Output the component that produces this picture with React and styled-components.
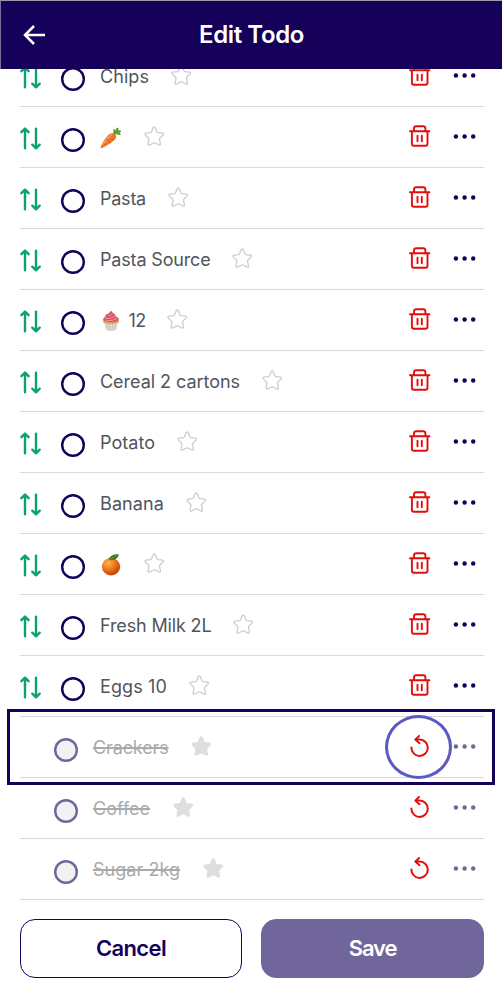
import { useLayoutEffect, useRef, useState } from "react";
import styled, { createGlobalStyle } from "styled-components";

const GlobalStyle = createGlobalStyle`
  :root {
    --navy: #15015a;
    --muted-navy: #71669b;
    --green: #0ba26b;
    --red: #e30d0d;
    --text: #50555c;
    --line: #d9d9d9;
  }
  * {
    box-sizing: border-box;
  }
  body {
    margin: 0;
    background-color: #fff;
    font-family: Inter, "Liberation Sans", sans-serif;
  }
  svg {
    display: block;
    overflow: visible;
  }
`;

const Screen = styled.div`
  width: 502px;
  height: 987px;
  display: flex;
  flex-direction: column;
  overflow: hidden;
`;

const Header = styled.header`
  flex: none;
  height: 69px;
  display: grid;
  grid-template-columns: 60px 1fr 60px;
  align-items: center;
  background-color: var(--navy);
  border-top: 1px solid #9c9bab;
  border-left: 1px solid #77709b;
  color: #fff;
`;

const BackButton = styled.button`
  border: 0;
  padding: 0 0 0 22px;
  background: none;
  color: inherit;
`;

const Title = styled.h1`
  margin: 0;
  text-align: center;
  font-size: 24px;
  line-height: 30px;
  font-weight: 600;
`;

const ListViewport = styled.main`
  flex: none;
  height: 831px;
  padding: 0 18px 0 20px;
  display: flex;
  flex-direction: column;
  justify-content: flex-end;
  overflow: hidden;
`;

const Row = styled.div`
  position: relative;
  flex: none;
  height: 61px;
  display: flex;
  align-items: center;
  padding-left: ${({ $done }) => ($done ? "34px" : "0")};
  padding-right: 8px;
  border-bottom: 1px solid var(--line);
`;

const DragHandle = styled.div`
  width: 22px;
  margin: 3px 19px 0 0;
  color: var(--green);
`;

const Check = styled.div`
  width: 24px;
  height: 24px;
  margin: 6px 15px 0 0;
  border-radius: 50%;
  background-color: ${({ $done }) => ($done ? "#f2f2f2" : "#fff")};
  box-shadow: inset 0 0 0 2.4px ${({ $done }) => ($done ? "var(--muted-navy)" : "var(--navy)")};
`;

const Label = styled.div`
  display: flex;
  align-items: center;
  gap: 6.5px;
  width: ${({ $width }) => $width}px;
  height: 24px;
  margin-top: 2px;
  margin-right: 21.5px;
  font-size: 18px;
  line-height: 24px;
  color: ${({ $done }) => ($done ? "#aaa" : "var(--text)")};
  white-space: nowrap;

  span {
    text-decoration: ${({ $done }) => ($done ? "line-through 2px #aaa" : "none")};
  }
`;

const Star = styled.div`
  margin: 0 auto 1px 0;
  color: ${({ $done }) => ($done ? "#dedede" : "#cbcbcb")};
`;

const Action = styled.div`
  width: 22px;
  margin-right: 22px;
  margin-bottom: 1.5px;
  color: var(--red);
`;

const More = styled.div`
  width: 23.5px;
  margin-bottom: 1px;
  color: ${({ $done }) => ($done ? "var(--muted-navy)" : "var(--navy)")};
`;

const HighlightBox = styled.div`
  position: absolute;
  inset: -8px -11px -8px -13px;
  border: 3px solid var(--navy);
  pointer-events: none;
`;

const HighlightRing = styled.div`
  position: absolute;
  top: -2px;
  left: 365px;
  width: 67px;
  height: 64px;
  border: 3px solid #5c59c4;
  border-radius: 50%;
  pointer-events: none;
`;

const Footer = styled.footer`
  display: grid;
  grid-template-columns: 222px 223px;
  gap: 19px;
  padding: 19px 18px 9px 20px;
`;

const Button = styled.button`
  height: 59px;
  padding: 0 0 1px;
  border: 1px solid ${({ $primary }) => ($primary ? "var(--muted-navy)" : "var(--navy)")};
  border-radius: 15px;
  background-color: ${({ $primary }) => ($primary ? "var(--muted-navy)" : "#fff")};
  color: ${({ $primary }) => ($primary ? "#fff" : "var(--navy)")};
  font: 600 22px/30px Inter, "Liberation Sans", sans-serif;
`;

const Fitted = styled.span`
  display: inline-block;
  white-space: nowrap;
`;

// Tracks the text in or out so that it fills the given width.
const FitText = ({ width, children }) => {
  const ref = useRef(null);
  const [spacing, setSpacing] = useState(0);

  useLayoutEffect(() => {
    const el = ref.current;
    el.style.letterSpacing = "0px";
    const next = (width - el.getBoundingClientRect().width) / children.length;
    el.style.letterSpacing = `${next}px`;
    setSpacing(next);
  }, [width, children]);

  return (
    <Fitted ref={ref} style={{ letterSpacing: `${spacing}px` }}>
      {children}
    </Fitted>
  );
};

const BackIcon = () => (
  <svg width="23" height="20" viewBox="0 0 23 20" fill="none" stroke="currentColor" strokeWidth="2.5">
    <path d="M22 10H2.2M11 1L2 10l9 9" />
  </svg>
);

const SortIcon = () => (
  <svg width="22" height="23" viewBox="0 0 22 23" fill="none" stroke="currentColor" strokeWidth="2.4" strokeLinecap="round" strokeLinejoin="round">
    <path d="M5 21.3V1.6M1.4 5.2L5 1.6l3.6 3.6" />
    <path d="M16 1.6v19.7M12.3 17.7l3.7 3.6 3.7-3.6" />
  </svg>
);

const StarIcon = ({ filled }) => (
  <svg width="20.5" height="20.5" viewBox="0 0 21 21" fill={filled ? "currentColor" : "none"} stroke="currentColor" strokeWidth="1.3" strokeLinejoin="round">
    <path d="M9.5 1.5Q10.5.2 11.4 1.5L13.4 6.2Q13.7 6.8 14.4 6.9L19 7.4Q20.7 7.8 19.6 9.1L16.2 12.5Q15.8 13 15.9 13.7L16.8 18.4Q16.9 20.1 15.3 19.5L11.2 17.4Q10.5 17.1 9.8 17.4L5.7 19.5Q4 20.1 4.2 18.4L5.1 13.7Q5.2 13 4.7 12.5L1.3 9.1Q.3 7.8 2 7.4L6.6 6.9Q7.3 6.8 7.6 6.2Z" />
  </svg>
);

const TrashIcon = () => (
  <svg width="22" height="22" viewBox="0 0 22 22" fill="none" stroke="currentColor" strokeWidth="1.9" strokeLinecap="round" strokeLinejoin="round">
    <path d="M1 6.3h19.4M2.9 6.3v12.4q0 2 2 2h11.6q2 0 2-2V6.3" />
    <path d="M5 6V3.5Q5 1.2 7.3 1.2h6.8q2.3 0 2.3 2.3V6" />
    <path d="M8.5 10.8v5.4M12.8 10.8v5.4" />
  </svg>
);

const RestoreIcon = () => (
  <svg width="22" height="22" viewBox="0 0 22 22" fill="none" stroke="currentColor" strokeWidth="2" strokeLinecap="round" strokeLinejoin="round">
    <path d="M2.4 12.5A8.2 8.2 0 1 0 10.6 4.5H7" />
    <path d="M10 1L6.3 4.6l4.2 3.6" />
  </svg>
);

const DotsIcon = () => (
  <svg width="23.5" height="5" viewBox="0 0 23.5 5" fill="currentColor">
    <circle cx="2.9" cy="2.5" r="2.2" />
    <circle cx="11.6" cy="2.5" r="2.2" />
    <circle cx="20.2" cy="2.5" r="2.2" />
  </svg>
);

const CarrotIcon = () => (
  <svg width="22" height="22" viewBox="0 0 22 22">
    <path d="M14 8C12 6 15 4 12.8 2.3 15 1.7 15.3 2.8 15.5 4 15.8 2 16.5 1 18 .4c.6 1.2.4 2.4-.1 3.3 1.2-.7 2.2-.6 3.2.2-.5 1.1-1.4 1.5-2.4 1.5 1.2.2 1.9.9 2.1 2.1-1.7.5-3.5 0-4.7-.7z" fill="#46951e" />
    <path d="M15.2 7.3l1.7-4.5M15.6 7l3.8-2.5M15.6 7.2l3.5-.2" stroke="#79bd36" strokeWidth=".8" />
    <path d="M.5 21.2C1 17.5 6.5 8.7 10.1 6.7c1.9-1.1 4.7-.5 5.7 1.3 1.1 2-.1 4.3-2.1 5.7C10.2 16.2 4.5 20.8.5 21.2z" fill="#ec7627" />
    <path d="M3 17.7C6 13 9 9 12 8" fill="none" stroke="#ffa35a" strokeWidth="1.4" />
    <path d="M6.4 12.1l2 1.2M9.6 8.5l1.3.9M9 15.1l1.4.9M12.4 11.5l1.6.9M4.2 17l1.1.7" stroke="#bc4c12" strokeWidth=".7" />
  </svg>
);

const CupcakeIcon = () => (
  <svg width="22" height="22" viewBox="0 0 22 22">
    <path d="M4 11.5h14l-1.6 8.2Q11 22.4 5.7 19.7z" fill="#e2d8ce" />
    <path d="M6.5 13l1 7M9.4 13.5l.3 7.2M12.6 13.5l-.3 7.2M15.6 13l-1 7" stroke="#c9bbae" strokeWidth=".7" />
    <path d="M3 10.4Q11 7 19 10.4q.2 2.2-1.2 2.6Q11 15.2 4.2 13 2.8 12.4 3 10.4z" fill="#dfa653" />
    <path d="M3.2 10.2C2.8 8 4.5 7.5 5.3 6.8 5 4.8 6.9 4.1 8.3 3.5 9.6 2.9 10.2 1.8 10.7.5c1.1 1 2 1.9 2.9 2.9 1.2.6 2.3 1.7 2.2 3.2 1.8.4 3.3 1.5 3 3.6-4.4 2.4-11.2 2.4-15.6 0z" fill="#dc5269" />
    <path d="M5.3 8.3c4 .8 8-.5 9.8-2.5M8 5.4c2 .2 3.6-.5 4.6-1.6M6.3 10.2c4.8 1 8.2-.1 10.7-2" fill="none" stroke="#f59aa8" strokeWidth="1" />
  </svg>
);

const OrangeIcon = () => (
  <svg width="22" height="22" viewBox="0 0 22 22">
    <defs>
      <radialGradient id="peel" cx=".36" cy=".3" r=".75">
        <stop offset="0" stopColor="#ffb353" />
        <stop offset=".45" stopColor="#ee7e1c" />
        <stop offset="1" stopColor="#b93c03" />
      </radialGradient>
    </defs>
    <ellipse cx="11" cy="12.6" rx="9.2" ry="8.8" fill="url(#peel)" />
    <path d="M10.8 6.2Q9.8 5.1 10 3.6" fill="none" stroke="#67651e" strokeWidth="1.2" />
    <path d="M9 5.3C10.5 1.4 14.5 0 18.8.4c-.6 3.7-4.4 6.3-9.8 4.9z" fill="#47691d" />
    <path d="M10.5 4.7Q14 3.6 17.5 1" fill="none" stroke="#8aab49" strokeWidth=".7" />
  </svg>
);

const todos = [
  { text: "Chips", width: 49, slot: 49.5 },
  { icon: <CarrotIcon />, slot: 22.5 },
  { text: "Pasta", width: 46, slot: 46.5 },
  { text: "Pasta Source", width: 110.5, slot: 110 },
  { icon: <CupcakeIcon />, text: "12", width: 17, slot: 45.5 },
  { text: "Cereal 2 cartons", width: 140, slot: 140 },
  { text: "Potato", width: 55, slot: 55 },
  { text: "Banana", width: 64, slot: 64 },
  { icon: <OrangeIcon />, slot: 22.5 },
  { text: "Fresh Milk 2L", width: 111.5, slot: 111.5 },
  { text: "Eggs 10", width: 67, slot: 67.5 },
  { text: "Crackers", width: 75.5, slot: 76.5, done: true, highlight: true },
  { text: "Coffee", width: 57, slot: 58, done: true },
  { text: "Sugar 2kg", width: 87, slot: 88, done: true },
];

const TodoRow = ({ text, icon, width, slot, done, highlight }) => (
  <Row $done={done}>
    {!done && (
      <DragHandle>
        <SortIcon />
      </DragHandle>
    )}
    <Check $done={done} />
    <Label $width={slot} $done={done}>
      {icon}
      {text && <FitText width={width}>{text}</FitText>}
    </Label>
    <Star $done={done}>
      <StarIcon filled={done} />
    </Star>
    <Action>{done ? <RestoreIcon /> : <TrashIcon />}</Action>
    <More $done={done}>
      <DotsIcon />
    </More>
    {highlight && (
      <>
        <HighlightBox />
        <HighlightRing />
      </>
    )}
  </Row>
);

const App = () => {
  return (
    <>
      <GlobalStyle />
      <Screen>
        <Header>
          <BackButton aria-label="Back">
            <BackIcon />
          </BackButton>
          <Title>
            <FitText width={105}>Edit Todo</FitText>
          </Title>
        </Header>
        <ListViewport>
          {todos.map((todo, i) => (
            <TodoRow key={i} {...todo} />
          ))}
        </ListViewport>
        <Footer>
          <Button>
            <FitText width={70}>Cancel</FitText>
          </Button>
          <Button $primary>
            <FitText width={47.5}>Save</FitText>
          </Button>
        </Footer>
      </Screen>
    </>
  );
};

export default App;
